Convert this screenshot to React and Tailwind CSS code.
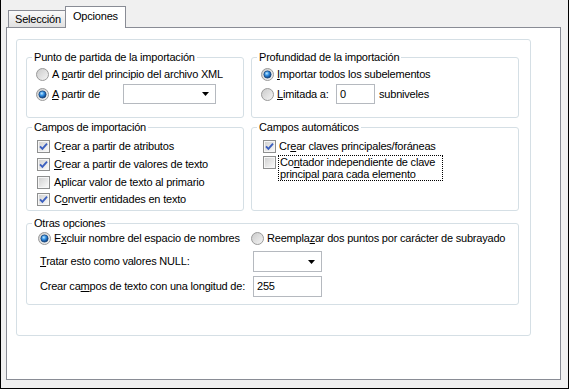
import React from 'react';

const Radio = ({ checked }) => (
  <svg width="13" height="13" viewBox="0 0 13 13" className="shrink-0">
    <defs>
      <linearGradient id="radioBg" x1="0" y1="0" x2="1" y2="1">
        <stop offset="0" stopColor="#c9c9c9" />
        <stop offset="1" stopColor="#f6f6f6" />
      </linearGradient>
      <radialGradient id="radioDot" cx="0.4" cy="0.35" r="0.65">
        <stop offset="0" stopColor="#c4ecff" />
        <stop offset="0.45" stopColor="#3592e6" />
        <stop offset="1" stopColor="#0c3a78" />
      </radialGradient>
    </defs>
    <circle cx="6.5" cy="6.5" r="6" fill="url(#radioBg)" stroke="#9a9a9a" />
    {checked && <circle cx="6.5" cy="6.5" r="3.6" fill="url(#radioDot)" stroke="#16467e" strokeWidth="0.8" />}
  </svg>
);

const Check = ({ checked }) => (
  <svg width="13" height="13" viewBox="0 0 13 13" className="shrink-0">
    <defs>
      <linearGradient id="checkBg" x1="0" y1="0" x2="1" y2="1">
        <stop offset="0" stopColor="#d2d2d2" />
        <stop offset="1" stopColor="#f8f8f8" />
      </linearGradient>
    </defs>
    <rect x="0.5" y="0.5" width="12" height="12" fill="#f6f6f6" stroke="#8e8f8f" />
    <rect x="2" y="2" width="9" height="9" fill="url(#checkBg)" />
    {checked && <path d="M3 6.3 L5.4 8.8 L10 3.6" stroke="#3b5fbf" strokeWidth="1.9" fill="none" />}
  </svg>
);

const Arrow = () => (
  <svg width="7" height="4" viewBox="0 0 7 4" className="shrink-0">
    <polygon points="0,0 7,0 3.5,4" fill="#000" />
  </svg>
);

const Group = ({ title, className, children }) => (
  <fieldset className={`border border-[#d5dfe5] rounded-[3px] min-w-0 ${className}`}>
    <legend className="ml-[5px] px-[2px] leading-[13px]">{title}</legend>
    {children}
  </fieldset>
);

const Option = ({ kind = 'radio', checked, children, className = '' }) => (
  <div className={`flex items-center gap-[3px] ${className}`}>
    {kind === 'radio' ? <Radio checked={checked} /> : <Check checked={checked} />}
    <span className="whitespace-nowrap">{children}</span>
  </div>
);

const Combo = ({ className = '' }) => (
  <div className={`bg-white border border-[#b5b9bf] flex items-center justify-end pr-[6px] ${className}`}>
    <Arrow />
  </div>
);

const App = () => {
  return (
    <div className="w-[569px] h-[389px] bg-[#f0f0f0] border-x border-b border-black flex flex-col pl-[5px] pr-[7px] pt-[6px] pb-[8px] font-['Liberation_Sans',Arial,sans-serif] text-[11px] leading-[13px] tracking-[-0.2px] text-black">
      {/* tabs */}
      <div className="flex items-end h-[21px] pl-[2px] shrink-0">
        <div className="h-[17px] w-[57px] border border-b-0 border-r-0 border-[#898c95] bg-gradient-to-b from-[#fafafa] to-[#e1e1e1] flex items-center pl-[6px] pt-px">
          Selección
        </div>
        <div className="h-[22px] w-[61px] -mb-px relative z-10 bg-white border border-b-0 border-[#898c95] flex items-center pl-[7px] pb-[2px]">
          Opciones
        </div>
      </div>

      {/* tab panel */}
      <div className="flex-1 bg-white border border-[#898c95] pl-[9px] pt-[11px]">
        <div className="w-[515px] h-[297px] border border-[#d5dfe5] rounded-[3px] pl-[9px] pt-[11px] flex flex-col">
          <div className="flex gap-[7px]">
            <Group title="Punto de partida de la importación" className="w-[218px] h-[67px]">
              <div className="pl-[9px] flex flex-col">
                <Option className="h-[20px]">
                  A <u>p</u>artir del principio del archivo XML
                </Option>
                <div className="flex items-center h-[20px]">
                  <Option checked className="w-[87px]">
                    <u>A</u> partir de
                  </Option>
                  <Combo className="w-[93px] h-[20px]" />
                </div>
              </div>
            </Group>
            <Group title="Profundidad de la importación" className="w-[268px] h-[67px]">
              <div className="pl-[9px] flex flex-col">
                <Option checked className="h-[20px]">
                  <u>I</u>mportar todos los subelementos
                </Option>
                <div className="flex items-center h-[20px]">
                  <Option className="w-[75px]">
                    <u>L</u>imitada a:
                  </Option>
                  <div className="w-[39px] h-[20px] border border-[#b5b9bf] bg-white pl-[3px] flex items-center">0</div>
                  <span className="ml-[4px]">subniveles</span>
                </div>
              </div>
            </Group>
          </div>

          <div className="flex gap-[7px] mt-[3px]">
            <Group title="Campos de importación" className="w-[218px] h-[90px]">
              <div className="pl-[10px] pt-[3px] flex flex-col">
                <Option kind="check" checked className="h-[18px] gap-[4px]">
                  C<u>r</u>ear a partir de atributos
                </Option>
                <Option kind="check" checked className="h-[18px] gap-[4px]">
                  <u>C</u>rear a partir de valores de texto
                </Option>
                <Option kind="check" className="h-[18px] gap-[4px]">
                  Aplicar valor de texto al primario
                </Option>
                <Option kind="check" checked className="h-[17px] gap-[4px]">
                  C<u>o</u>nvertir entidades en texto
                </Option>
              </div>
            </Group>
            <Group title="Campos automáticos" className="w-[268px] h-[90px]">
              <div className="pl-[11px] pt-[3px] flex flex-col">
                <Option kind="check" checked className="h-[18px] gap-[3px]">
                  Cr<u>e</u>ar claves principales/foráneas
                </Option>
                <div className="flex items-start gap-[2px]">
                  <div className="pt-[1px]">
                    <Check />
                  </div>
                  <span className="border border-dotted border-black leading-[12px] w-[165px] pl-px">
                    Co<u>n</u>tador independiente de clave
                    <br />
                    principal para cada elemento
                  </span>
                </div>
              </div>
            </Group>
          </div>

          <Group title="Otras opciones" className="w-[493px] h-[88px] mt-[6px]">
            <div className="flex flex-col">
              <div className="flex items-center h-[16px] pl-[11px]">
                <Option checked className="w-[213px]">
                  E<u>x</u>cluir nombre del espacio de nombres
                </Option>
                <Option>
                  Reempla<u>z</u>ar dos puntos por carácter de subrayado
                </Option>
              </div>
              <div className="flex items-center h-[21px] mt-[5px] pl-[13px]">
                <span className="w-[213px]">
                  <u>T</u>ratar esto como valores NULL:
                </span>
                <Combo className="w-[69px] h-[21px]" />
              </div>
              <div className="flex items-center h-[21px] mt-[4px] pl-[13px]">
                <span className="w-[213px]">
                  Crear ca<u>m</u>pos de texto con una longitud de:
                </span>
                <div className="w-[69px] h-[21px] border border-[#b5b9bf] bg-white pl-[3px] flex items-center">255</div>
              </div>
            </div>
          </Group>
        </div>
      </div>
    </div>
  );
};

export default App;
